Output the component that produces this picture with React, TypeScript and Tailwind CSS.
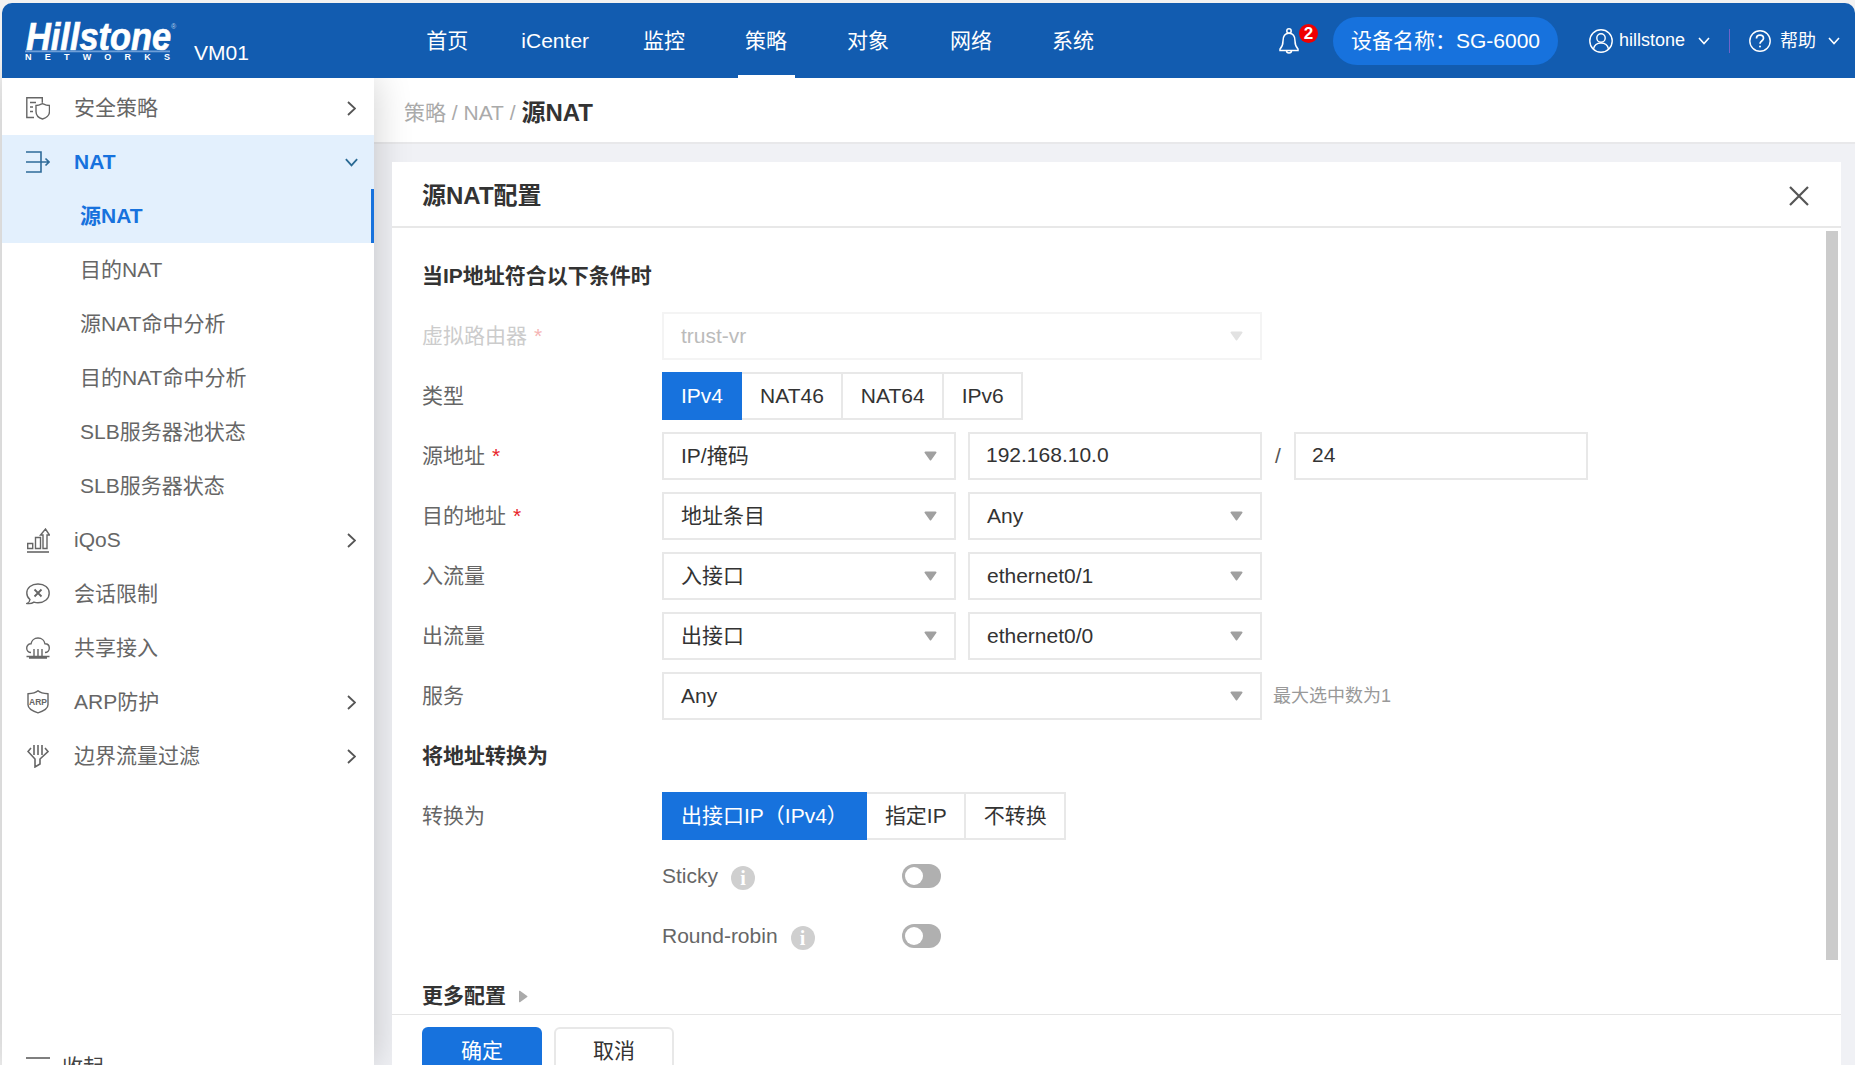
import React from "react";

const Chevron = ({ cls = "w-[9px] h-[15px] text-[#555]" }: { cls?: string }) => (
  <svg viewBox="0 0 9 15" className={cls} fill="none" stroke="currentColor" strokeWidth="1.8">
    <path d="M1 1l7 6.5L1 14" />
  </svg>
);
const Down = ({ cls = "w-[12px] h-[8px] text-white" }: { cls?: string }) => (
  <svg viewBox="0 0 12 8" className={cls} fill="none" stroke="currentColor" strokeWidth="1.6">
    <path d="M1 1l5 5.5L11 1" />
  </svg>
);
const Arrow = ({ light }: { light?: boolean }) => (
  <svg viewBox="0 0 13 10" className="w-[13px] h-[10px]">
    <path d="M1.5 0.5h10a1 1 0 0 1 .8 1.6L7.3 9a1 1 0 0 1-1.6 0L.7 2.1A1 1 0 0 1 1.5.5z" fill={light ? "#e2e2e2" : "#a0a0a0"} />
  </svg>
);

const ico = { fill: "none", stroke: "currentColor", strokeWidth: 1.4 };
const IconPolicy = () => (
  <svg viewBox="0 0 24 23" className="w-[24px] h-[23px]" {...ico}>
    <path d="M8 20.5H.8V.8h15.5v5" />
    <path d="M4 5.5h6M4 10h3M4 14.5h3" />
    <path d="M10 8.5c3 0 4-.7 6.5-2 2.500 1.300 3.500 2 7 2v6c0 4-3.500 6.500-7 7.500-3.500-1-6.500-3.500-6.500-7.500z" />
  </svg>
);
const IconNat = () => (
  <svg viewBox="0 0 24 22" className="w-[24px] h-[22px]" {...ico} strokeWidth={1.6}>
    <path d="M0 1h15v20H0M0 11h23M19.500 7.500L23 11l-3.500 3.500" />
  </svg>
);
const IconQos = () => (
  <svg viewBox="0 0 23 25" className="w-[23px] h-[25px]" {...ico}>
    <path d="M.7 15.500h5v5h-5zM8.500 9.500h5v11h-5zM16 20.500V7h-2.500L18.500 1l4 6H20v13.500z" />
    <path d="M0 24h22" strokeWidth={1.6} />
  </svg>
);
const IconSession = () => (
  <svg viewBox="0 0 24 22" className="w-[24px] h-[22px]" {...ico}>
    <path d="M12 1C5.500 1 .8 4.800.8 10c0 2.800 1.200 5 3.200 6.500-.2 1.700-1.200 3.200-3 4 3 .5 5.500-.3 7-1.400 1.300.4 2.600.6 4 .6 6.500 0 11.200-4 11.200-9.500S18.500 1 12 1z" />
    <path d="M8.500 6.500l7 7M15.500 6.500l-7 7" strokeWidth={1.8} />
  </svg>
);
const IconCloud = () => (
  <svg viewBox="0 0 24 22" className="w-[24px] h-[22px]" {...ico}>
    <path d="M5 15.500C2.500 15.500.7 13.500.7 11S2.600 6.700 5 6.800C5.500 3.500 8.300 1 12 1s6.500 2.500 7 5.800c2.500 0 4.300 1.800 4.300 4.200s-1.800 4.500-4.300 4.500" />
    <path d="M0.500 19.500h23M8 12v7.500M12 12v7.500M16 12v7.500M3 21h18" />
  </svg>
);
const IconArp = () => (
  <svg viewBox="0 0 22 24" className="w-[22px] h-[24px]" {...ico}>
    <path d="M11 .8c2 1.800 5 2.700 10 3v11c0 3.500-5 6.500-10 8-5-1.500-10-4.500-10-8v-11c5-.3 8-1.200 10-3z" />
    <text x="11" y="14.500" textAnchor="middle" fontSize="8.500" fontWeight="700" fill="currentColor" stroke="none" fontFamily="Liberation Sans, sans-serif">ARP</text>
  </svg>
);
const IconFilter = () => (
  <svg viewBox="0 0 22 24" className="w-[22px] h-[24px]" {...ico} strokeWidth={1.6}>
    <path d="M7 1v10M11 1v10M15 1v10" />
    <path d="M4 4L1 7.500 8 15v8l5-3v-5l8-7.500L18 4" />
  </svg>
);
const IconCollapse = () => (
  <svg viewBox="0 0 24 20" className="w-[24px] h-[20px]" fill="none" stroke="#555" strokeWidth={1.6}>
    <path d="M0 1h24M0 10h13M0 19h24" />
  </svg>
);

const Logo = () => (
  <svg viewBox="0 0 150 42" className="self-start ml-[22px] mt-[17px] w-[150px] h-[42px] shrink-0 overflow-visible">
    <text x="2" y="30" fontSize="39" fontWeight="700" fontStyle="italic" fill="white" stroke="white" strokeWidth="0.7" textLength="145" lengthAdjust="spacingAndGlyphs" fontFamily="Liberation Sans, sans-serif">Hillstone</text>
    <text x="147" y="9" fontSize="7" fill="#b8cfe8" fontFamily="Liberation Sans, sans-serif">®</text>
    <rect x="1" y="30.500" width="145" height="1.800" fill="#6f9fd8" />
    <text x="1" y="40" fontSize="9" fontWeight="700" fill="white" textLength="145" fontFamily="Liberation Sans, sans-serif">NETWORKS</text>
  </svg>
);

type Item = { label: string; icon?: React.ReactNode; chev?: boolean };
const top: Item[] = [{ label: "安全策略", icon: <IconPolicy />, chev: true }];
const sub = ["目的NAT", "源NAT命中分析", "目的NAT命中分析", "SLB服务器池状态", "SLB服务器状态"];
const bottom: Item[] = [
  { label: "iQoS", icon: <IconQos />, chev: true },
  { label: "会话限制", icon: <IconSession /> },
  { label: "共享接入", icon: <IconCloud /> },
  { label: "ARP防护", icon: <IconArp />, chev: true },
  { label: "边界流量过滤", icon: <IconFilter />, chev: true },
];

const Row = ({ item }: { item: Item }) => (
  <div className="flex items-center h-[54px] pl-[24px] pr-[18px] text-[21px] text-[#666]">
    <span className="w-[24px] flex justify-center text-[#666]">{item.icon}</span>
    <span className="ml-[24px] flex-1">{item.label}</span>
    {item.chev && <Chevron />}
  </div>
);

const Label = ({ text, req, dis }: { text?: string; req?: boolean; dis?: boolean }) => (
  <div className={`w-[240px] text-[21px] ${dis ? "text-[#ccc]" : "text-[#666]"}`}>
    {text}
    {req && <span className={`ml-[7px] ${dis ? "text-[#f5b5b5]" : "text-[#e8232a]"}`}>*</span>}
  </div>
);

const Select = ({ text, cls = "w-[294px]", dis }: { text: string; cls?: string; dis?: boolean }) => (
  <div className={`${cls} h-[48px] flex items-center justify-between pl-[17px] pr-[17px] border-2 text-[21px] ${dis ? "border-[#f4f4f4] text-[#bbb]" : "border-[#e8e8e8] text-[#333]"}`}>
    <span>{text}</span>
    <Arrow light={dis} />
  </div>
);
const Input = ({ text }: { text: string }) => (
  <div className="w-[294px] h-[48px] flex items-center pl-[16px] border-2 border-[#e8e8e8] text-[21px] text-[#333] pb-[2px]">{text}</div>
);
const FormRow = ({ children }: { children: React.ReactNode }) => (
  <div className="flex items-center h-[48px] mb-[12px]">{children}</div>
);
const Seg = ({ items }: { items: string[] }) => (
  <div className="flex h-[48px] text-[21px] text-[#333]">
    {items.map((t, i) => (
      <div
        key={t}
        className={
          i === 0
            ? "flex items-center px-[19px] bg-[#1772dd] text-white"
            : "flex items-center pl-[18px] pr-[17px] border-y-2 border-r-2 border-[#e8e8e8]"
        }
      >
        {t}
      </div>
    ))}
  </div>
);
const Heading = ({ children }: { children: React.ReactNode }) => (
  <div className="flex items-center h-[48px] mb-[12px] text-[21px] font-bold text-[#333]">{children}</div>
);
const Info = () => (
  <span className="w-[24px] h-[24px] mt-[4px] rounded-full bg-[#cfcfcf] text-white flex items-center justify-center text-[20px] font-bold [font-family:'Liberation_Serif',serif]">i</span>
);
const Toggle = () => (
  <span className="w-[39px] h-[24px] rounded-full bg-[#b0b0b0] flex items-center pl-[3px]">
    <span className="w-[18px] h-[18px] rounded-full bg-white" />
  </span>
);

export default function App() {
  return (
    <div className="h-screen w-full overflow-hidden flex flex-col pt-[3px] pl-[2px] bg-[#f2f2f2] [font-family:'Liberation_Sans','Noto_Sans_CJK_SC',sans-serif]">
      <header className="relative z-20 h-[75px] shrink-0 flex items-center rounded-t-[10px] bg-[#125cb0] text-white">
        <Logo />
        <div className="ml-[20px] mt-[25px] text-[21px] leading-[24px]">VM01</div>
        <nav className="ml-[170px] flex items-stretch gap-[45px] h-full text-[21px]">
          <div className="flex items-center px-[7.5px]">首页</div>
          <div className="flex items-center px-[7.5px] ml-[-7px] mr-[-6px]">iCenter</div>
          <div className="flex items-center px-[7.5px]">监控</div>
          <div className="flex items-center px-[7.5px] border-b-[3px] border-white pt-[3px]">策略</div>
          <div className="flex items-center px-[7.5px]">对象</div>
          <div className="flex items-center px-[7.5px] ml-[1px]">网络</div>
          <div className="flex items-center px-[7.5px]">系统</div>
        </nav>
        <div className="ml-auto flex items-center pr-[15px]">
          <div className="relative w-[20px] h-[26px]">
            <svg viewBox="0 0 20 26" className="w-[20px] h-[26px]" fill="none" stroke="white" strokeWidth="1.5">
              <circle cx="10" cy="3" r="2.200" />
              <path d="M10 5.200C5.500 5.200 4 9 4 13c0 4-1 6-3 8v1.500h18V21c-2-2-3-4-3-8 0-4-1.500-7.800-6-7.800z" />
              <path d="M7.500 22.500a2.500 2.500 0 0 0 5 0" />
            </svg>
            <span className="absolute left-[20px] top-[-4px] w-[19px] h-[19px] rounded-full bg-[#f00000] text-white text-[17px] font-bold flex items-center justify-center leading-none">2</span>
          </div>
          <div className="ml-[34px] h-[48px] w-[225px] rounded-full bg-[#1772dd] flex items-center pl-[18px] text-[21px] whitespace-nowrap">设备名称：SG-6000</div>
          <svg viewBox="0 0 24 24" className="ml-[31px] w-[24px] h-[24px]" fill="none" stroke="white" strokeWidth="1.4">
            <circle cx="12" cy="12" r="11.200" />
            <circle cx="12" cy="9" r="4.200" />
            <path d="M4.500 20c.8-3.800 3.800-6 7.500-6s6.700 2.200 7.500 6" />
          </svg>
          <span className="ml-[6px] text-[18px] mb-[1px]">hillstone</span>
          <Down cls="ml-[13px] w-[12px] h-[8px] text-white" />
          <span className="ml-[19px] w-[1px] h-[24px] bg-[#6e64c8]" />
          <svg viewBox="0 0 22 22" className="ml-[19px] w-[22px] h-[22px]" fill="none" stroke="white" strokeWidth="1.400">
            <circle cx="11" cy="11" r="10.200" />
            <path d="M7.500 8.500c0-2 1.500-3.300 3.500-3.300s3.500 1.300 3.500 3.100c0 2.700-3.500 2.700-3.500 5.400" strokeWidth="1.700" />
            <circle cx="11" cy="16.500" r="1" fill="white" stroke="none" />
          </svg>
          <span className="ml-[9px] text-[18px] mt-[1px]">帮助</span>
          <Down cls="ml-[12px] w-[12px] h-[8px] text-white" />
        </div>
      </header>

      <div className="flex flex-1 min-h-0">
        <aside className="relative z-10 w-[372px] shrink-0 bg-white pt-[3px] shadow-[0_0_36px_rgba(0,0,0,0.2)]">
          {top.map((it) => (
            <Row key={it.label} item={it} />
          ))}
          <div className="flex items-center h-[54px] pl-[24px] pr-[15px] bg-[#e3f0fd] text-[21px] font-bold text-[#1772dd]">
            <span className="w-[24px] flex justify-center text-[#2f6b99]">
              <IconNat />
            </span>
            <span className="ml-[24px] flex-1">NAT</span>
            <Down cls="w-[15px] h-[9px] text-[#2a6a94]" />
          </div>
          <div className="flex items-center h-[54px] pl-[78px] bg-[#e3f0fd] border-r-[3px] border-[#1772dd] text-[21px] font-bold text-[#1772dd]">源NAT</div>
          {sub.map((s) => (
            <div key={s} className="flex items-center h-[54px] pl-[78px] text-[21px] text-[#666]">
              {s}
            </div>
          ))}
          {bottom.map((it) => (
            <Row key={it.label} item={it} />
          ))}
          <div className="mt-[257px] flex items-center h-[54px] pl-[24px] text-[21px] text-[#444]">
            <IconCollapse />
            <span className="ml-[12px]">收起</span>
          </div>
        </aside>

        <main className="flex-1 min-w-0 flex flex-col bg-[#f0f1f5]">
          <div className="h-[66px] shrink-0 pt-[5px] flex items-center pl-[30px] bg-white border-b-2 border-[#e8e8ea] text-[21px] text-[#aaa]">
            <span>策略&nbsp;/&nbsp;NAT&nbsp;/&nbsp;</span>
            <span className="text-[24px] font-bold text-[#333]">源NAT</span>
          </div>
          <div className="relative z-20 ml-[18px] mr-[14px] mt-[18px] flex-1 min-h-0 bg-white overflow-hidden">
            <div className="h-[66px] flex items-center justify-between pl-[30px] pr-[32px] pt-[3px] border-b-2 border-[#e8e8e8]">
              <span className="text-[24px] font-bold text-[#333]">源NAT配置</span>
              <svg viewBox="0 0 20 20" className="w-[20px] h-[20px]" fill="none" stroke="#555" strokeWidth="2.200">
                <path d="M1 1l18 18M19 1L1 19" />
              </svg>
            </div>
            <div className="relative h-[786px] overflow-hidden pl-[30px] pt-[24px]">
              <div className="absolute right-[3px] top-[3px] w-[12px] h-[729px] bg-[#cbcbcb]" />
              <Heading>当IP地址符合以下条件时</Heading>
              <FormRow>
                <Label text="虚拟路由器" req dis />
                <Select text="trust-vr" cls="w-[600px]" dis />
              </FormRow>
              <FormRow>
                <Label text="类型" />
                <Seg items={["IPv4", "NAT46", "NAT64", "IPv6"]} />
              </FormRow>
              <FormRow>
                <Label text="源地址" req />
                <Select text="IP/掩码" />
                <div className="ml-[12px]"><Input text="192.168.10.0" /></div>
                <span className="w-[32px] text-center text-[21px] text-[#555]">/</span>
                <Input text="24" />
              </FormRow>
              <FormRow>
                <Label text="目的地址" req />
                <Select text="地址条目" />
                <div className="ml-[12px]"><Select text="Any" /></div>
              </FormRow>
              <FormRow>
                <Label text="入流量" />
                <Select text="入接口" />
                <div className="ml-[12px]"><Select text="ethernet0/1" /></div>
              </FormRow>
              <FormRow>
                <Label text="出流量" />
                <Select text="出接口" />
                <div className="ml-[12px]"><Select text="ethernet0/0" /></div>
              </FormRow>
              <FormRow>
                <Label text="服务" />
                <Select text="Any" cls="w-[600px]" />
                <span className="ml-[11px] text-[18px] text-[#999]">最大选中数为1</span>
              </FormRow>
              <Heading>将地址转换为</Heading>
              <FormRow>
                <Label text="转换为" />
                <Seg items={["出接口IP（IPv4）", "指定IP", "不转换"]} />
              </FormRow>
              <FormRow>
                <Label />
                <div className="w-[240px] flex items-center text-[21px] text-[#666]">
                  <span className="mr-[13px]">Sticky</span>
                  <Info />
                </div>
                <Toggle />
              </FormRow>
              <FormRow>
                <Label />
                <div className="w-[240px] flex items-center text-[21px] text-[#666]">
                  <span className="mr-[13px]">Round-robin</span>
                  <Info />
                </div>
                <Toggle />
              </FormRow>
              <Heading>
                更多配置
                <svg viewBox="0 0 10 13" className="ml-[12px] w-[10px] h-[13px]">
                  <path d="M1 1.500v10a.8.8 0 0 0 1.300.6l6.900-5a.8.8 0 0 0 0-1.200l-6.900-5A.8.8 0 0 0 1 1.500z" fill="#aaa" />
                </svg>
              </Heading>
            </div>
            <div className="border-t border-[#e5e5e5] pl-[30px] pt-[12px] flex gap-[12px]">
              <div className="w-[120px] h-[48px] rounded-[6px] bg-[#1772dd] text-white text-[21px] flex items-center justify-center">确定</div>
              <div className="w-[120px] h-[48px] rounded-[6px] border-2 border-[#e8e8e8] text-[#333] text-[21px] flex items-center justify-center">取消</div>
            </div>
          </div>
        </main>
      </div>
    </div>
  );
}
